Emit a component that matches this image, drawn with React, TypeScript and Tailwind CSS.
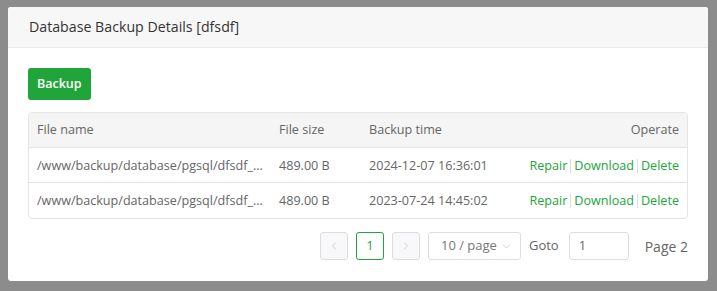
import { ChevronLeft, ChevronRight, ChevronDown } from 'lucide-react';

const rows = [
  { name: '/www/backup/database/pgsql/dfsdf_20241207_163601.sql.gz', size: '489.00 B', time: '2024-12-07 16:36:01' },
  { name: '/www/backup/database/pgsql/dfsdf_20230724_144502.sql.gz', size: '489.00 B', time: '2023-07-24 14:45:02' },
];

const App = () => {
  return (
    <div
      className="h-[291px] w-[717px] bg-[#8c8c8c] pl-2 pt-[7px]"
      style={{ fontFamily: '"Open Sans", "Noto Sans", sans-serif' }}
    >
      <div className="h-[274px] w-[700px] overflow-hidden rounded-[3px] bg-white">
        <div className="flex h-[41px] items-center border-b border-[#ebebeb] bg-[#f7f7f7] pl-[21px] text-[14.2px] text-[#333]">
          Database Backup Details [dfsdf]
        </div>
        <div className="px-5 pt-5">
          <button className="h-[32px] rounded-[3px] bg-[#20a53a] px-[9px] text-[12.5px] font-semibold text-white">
            Backup
          </button>
          <div className="mt-[12px] overflow-hidden rounded-[4px] border border-[#e4e4e4] text-[12.6px] text-[#666]">
            <div className="flex h-[35px] items-center border-b border-[#e4e4e4] bg-[#f5f5f5]">
              <div className="w-[250px] pl-2">File name</div>
              <div className="w-[90px]">File size</div>
              <div className="w-[150px]">Backup time</div>
              <div className="flex-1 pr-2 text-right">Operate</div>
            </div>
            {rows.map((row, index) => (
              <div
                key={index}
                className={`flex h-[35px] items-center pt-[2px] ${index === 0 ? 'border-b border-[#e4e4e4]' : ''}`}
              >
                <div className="w-[250px] pl-2 pr-[10px]">
                  <div className="truncate">{row.name}</div>
                </div>
                <div className="w-[90px]">{row.size}</div>
                <div className="w-[150px]">{row.time}</div>
                <div className="flex flex-1 items-center justify-end pr-2 text-[#20a53a]">
                  <span>Repair</span>
                  <span className="mx-[3px] h-[14px] w-px bg-[#ddd]"></span>
                  <span>Download</span>
                  <span className="mx-[3px] h-[14px] w-px bg-[#ddd]"></span>
                  <span>Delete</span>
                </div>
              </div>
            ))}
          </div>
          <div className="mt-[13px] flex items-center justify-end text-[13px] text-[#666]">
            <div className="flex h-[28px] w-[28px] items-center justify-center rounded-[3px] border border-[#ddd] bg-[#f8f8fa] text-[#c0c0c0]">
              <ChevronLeft size={12} strokeWidth={1.5} />
            </div>
            <div className="ml-2 flex h-[28px] w-[28px] items-center justify-center rounded-[3px] border border-[#20a53a] text-[#20a53a]">
              1
            </div>
            <div className="ml-2 flex h-[28px] w-[28px] items-center justify-center rounded-[3px] border border-[#ddd] bg-[#f8f8fa] text-[#c0c0c0]">
              <ChevronRight size={12} strokeWidth={1.5} />
            </div>
            <div className="ml-2 flex h-[28px] w-[93px] items-center rounded-[3px] border border-[#ddd] pl-[12px] text-[#777]">
              10 / page
              <ChevronDown size={13} strokeWidth={1.2} className="ml-[3px] text-[#bbb]" />
            </div>
            <span className="ml-[8px] text-[#666]">Goto</span>
            <div className="ml-[10px] flex h-[28px] w-[60px] items-center rounded-[3px] border border-[#ddd] pl-[9px] text-[#666]">
              1
            </div>
            <span className="ml-[16px] text-[14px] text-[#666]">Page 2</span>
          </div>
        </div>
      </div>
    </div>
  );
};

export default App;
